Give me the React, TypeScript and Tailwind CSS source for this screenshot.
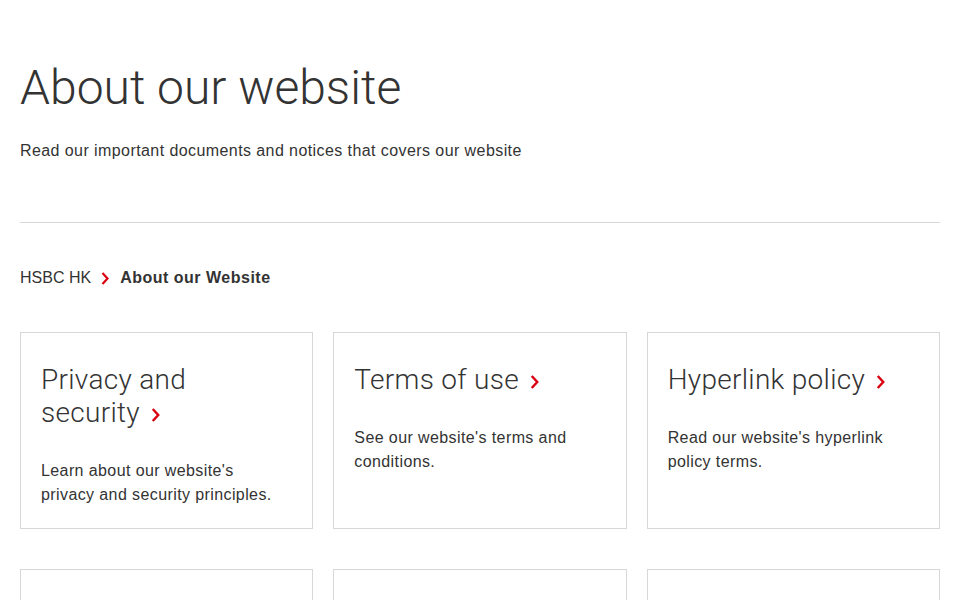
import { ReactNode } from "react";

const cards = [
  {
    title: "Privacy and security",
    text: "Learn about our website's privacy and security principles.",
  },
  {
    title: "Terms of use",
    text: "See our website's terms and conditions.",
  },
  {
    title: "Hyperlink policy",
    text: "Read our website's hyperlink policy terms.",
  },
  { title: "", text: "" },
  { title: "", text: "" },
  { title: "", text: "" },
];

function Chevron({ className }: { className?: string }) {
  return (
    <svg
      viewBox="0 0 10 14"
      className={className}
      fill="none"
      stroke="#db0011"
      strokeWidth="2.2"
    >
      <path d="M2.5 1.5 L7.5 7 L2.5 12.5" />
    </svg>
  );
}

function Card({ title, text }: { title: string; text: string }): ReactNode {
  const words = title.split(" ");
  const last = words.pop();
  return (
    <div className="border border-[#d7d7d7] bg-white pt-[30px] pl-5 pr-4 pb-[21px] min-h-[196px]">
      {title && (
        <>
          <h2 className="text-[28px] leading-[33px] font-light text-[#333] pr-6 font-['Roboto',sans-serif] tracking-[0.3px]">
            {words.join(" ")}{" "}
            <span className="whitespace-nowrap">
              {last}
              <Chevron className="inline-block w-[11px] h-[16px] ml-[10px] align-[-1px]" />
            </span>
          </h2>
          <p className="mt-[30px] pr-4 text-[16px] leading-6 text-[#333] tracking-[0.4px]">{text}</p>
        </>
      )}
    </div>
  );
}

export default function App() {
  return (
    <div className="min-h-screen bg-white px-5 text-[#333] font-['Liberation_Sans',Arial,sans-serif]">
      <h1 className="pt-[58px] text-[48px] leading-[60px] font-light font-['Roboto',sans-serif]">
        About our website
      </h1>
      <p className="mt-[21px] text-[16px] leading-6 tracking-[0.42px]">
        Read our important documents and notices that covers our website
      </p>
      <div className="mt-[59px] border-t border-[#d7d7d7]" />
      <nav className="mt-[43px] flex items-center text-[16px] leading-6">
        <span>HSBC HK</span>
        <Chevron className="w-[10px] h-[15px] ml-[9px] mr-[10px]" />
        <span className="font-bold tracking-[0.5px]">About our Website</span>
      </nav>
      <div className="mt-[42px] grid grid-cols-3 gap-x-5 gap-y-10 pb-10">
        {cards.map((c, i) => (
          <Card key={i} title={c.title} text={c.text} />
        ))}
      </div>
    </div>
  );
}
